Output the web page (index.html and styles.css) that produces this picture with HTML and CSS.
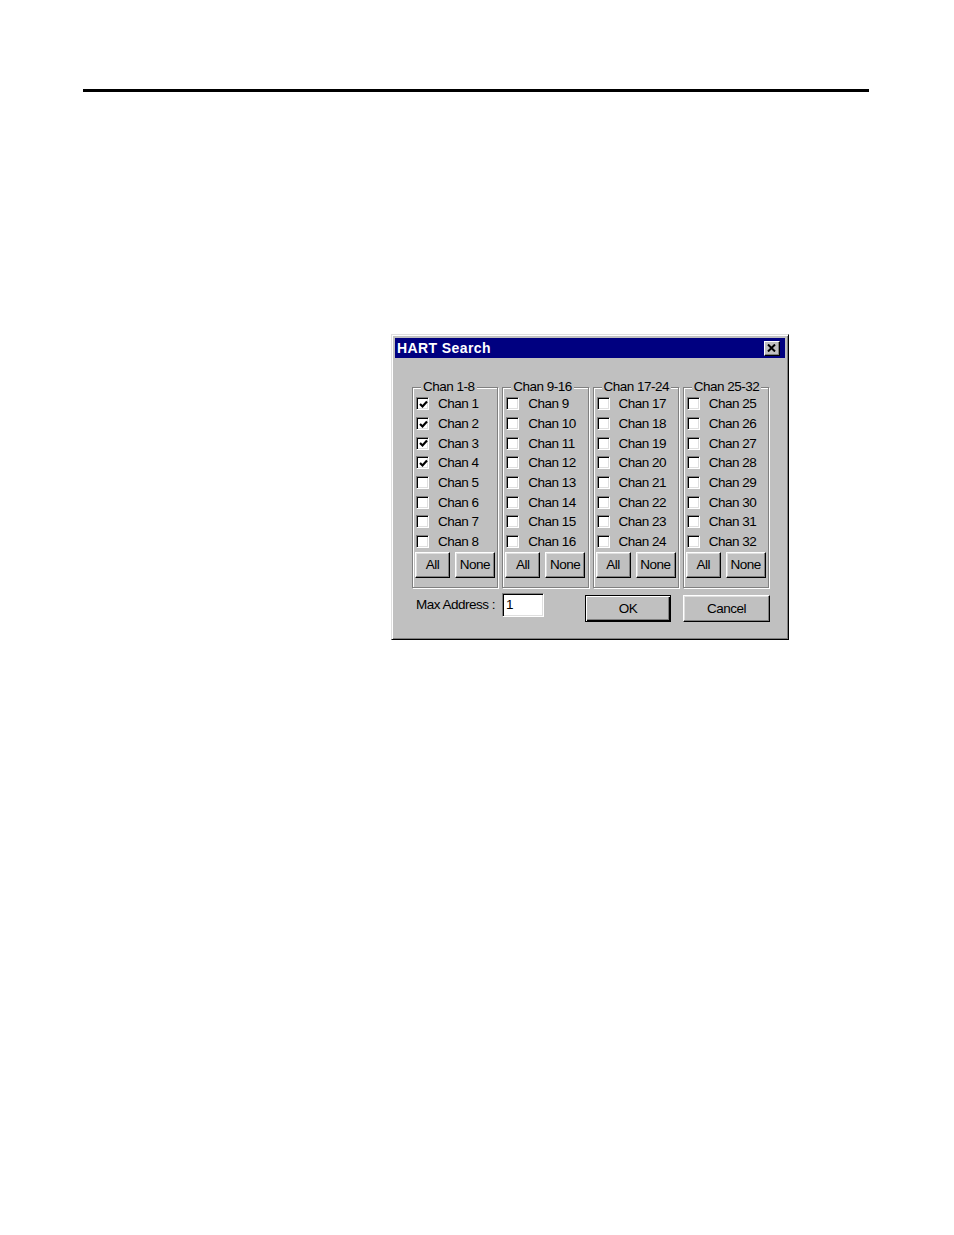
FILE: index.html
```html
<!DOCTYPE html>
<html>
<head>
<meta charset="utf-8">
<title>HART Search</title>
<link rel="stylesheet" href="styles.css">
</head>
<body>
<div class="rule"></div>
<div class="dialog">
  <div class="titlebar">
    <span class="title">HART Search</span>
    <span class="close"><svg width="9" height="8" viewBox="0 0 9 8"><path d="M1 0.5 L8 7.5 M8 0.5 L1 7.5" stroke="#000" stroke-width="2" fill="none"/></svg></span>
  </div>
  <div class="body">
    <div class="groups">
      <div class="group">
        <span class="legend">Chan 1-8</span>
        <div class="row"><span class="cb"><svg class="tick" width="9" height="9" viewBox="0 0 9 9"><path d="M1 4 L3.5 6.5 L8 1.5" stroke="#000" stroke-width="2.2" fill="none"/></svg></span><span class="lbl">Chan 1</span></div>
        <div class="row"><span class="cb"><svg class="tick" width="9" height="9" viewBox="0 0 9 9"><path d="M1 4 L3.5 6.5 L8 1.5" stroke="#000" stroke-width="2.2" fill="none"/></svg></span><span class="lbl">Chan 2</span></div>
        <div class="row"><span class="cb"><svg class="tick" width="9" height="9" viewBox="0 0 9 9"><path d="M1 4 L3.5 6.5 L8 1.5" stroke="#000" stroke-width="2.2" fill="none"/></svg></span><span class="lbl">Chan 3</span></div>
        <div class="row"><span class="cb"><svg class="tick" width="9" height="9" viewBox="0 0 9 9"><path d="M1 4 L3.5 6.5 L8 1.5" stroke="#000" stroke-width="2.2" fill="none"/></svg></span><span class="lbl">Chan 4</span></div>
        <div class="row"><span class="cb"></span><span class="lbl">Chan 5</span></div>
        <div class="row"><span class="cb"></span><span class="lbl">Chan 6</span></div>
        <div class="row"><span class="cb"></span><span class="lbl">Chan 7</span></div>
        <div class="row"><span class="cb"></span><span class="lbl">Chan 8</span></div>
        <div class="btns"><span class="btn all">All</span><span class="btn none">None</span></div>
      </div>
      <div class="group">
        <span class="legend">Chan 9-16</span>
        <div class="row"><span class="cb"></span><span class="lbl">Chan 9</span></div>
        <div class="row"><span class="cb"></span><span class="lbl">Chan 10</span></div>
        <div class="row"><span class="cb"></span><span class="lbl">Chan 11</span></div>
        <div class="row"><span class="cb"></span><span class="lbl">Chan 12</span></div>
        <div class="row"><span class="cb"></span><span class="lbl">Chan 13</span></div>
        <div class="row"><span class="cb"></span><span class="lbl">Chan 14</span></div>
        <div class="row"><span class="cb"></span><span class="lbl">Chan 15</span></div>
        <div class="row"><span class="cb"></span><span class="lbl">Chan 16</span></div>
        <div class="btns"><span class="btn all">All</span><span class="btn none">None</span></div>
      </div>
      <div class="group">
        <span class="legend">Chan 17-24</span>
        <div class="row"><span class="cb"></span><span class="lbl">Chan 17</span></div>
        <div class="row"><span class="cb"></span><span class="lbl">Chan 18</span></div>
        <div class="row"><span class="cb"></span><span class="lbl">Chan 19</span></div>
        <div class="row"><span class="cb"></span><span class="lbl">Chan 20</span></div>
        <div class="row"><span class="cb"></span><span class="lbl">Chan 21</span></div>
        <div class="row"><span class="cb"></span><span class="lbl">Chan 22</span></div>
        <div class="row"><span class="cb"></span><span class="lbl">Chan 23</span></div>
        <div class="row"><span class="cb"></span><span class="lbl">Chan 24</span></div>
        <div class="btns"><span class="btn all">All</span><span class="btn none">None</span></div>
      </div>
      <div class="group">
        <span class="legend">Chan 25-32</span>
        <div class="row"><span class="cb"></span><span class="lbl">Chan 25</span></div>
        <div class="row"><span class="cb"></span><span class="lbl">Chan 26</span></div>
        <div class="row"><span class="cb"></span><span class="lbl">Chan 27</span></div>
        <div class="row"><span class="cb"></span><span class="lbl">Chan 28</span></div>
        <div class="row"><span class="cb"></span><span class="lbl">Chan 29</span></div>
        <div class="row"><span class="cb"></span><span class="lbl">Chan 30</span></div>
        <div class="row"><span class="cb"></span><span class="lbl">Chan 31</span></div>
        <div class="row"><span class="cb"></span><span class="lbl">Chan 32</span></div>
        <div class="btns"><span class="btn all">All</span><span class="btn none">None</span></div>
      </div>
    </div>
    <div class="bottom">
      <span class="maxlbl">Max Address :</span>
      <span class="input">1</span>
      <span class="btn ok">OK</span>
      <span class="btn cancel">Cancel</span>
    </div>
  </div>
</div>
</body>
</html>
```

FILE: styles.css
```css
html, body {
  margin: 0;
  padding: 0;
  background: #fff;
}

body {
  font-family: "Liberation Sans", Arial, sans-serif;
  font-size: 13.5px;
  letter-spacing: -0.5px;
  color: #000;
}

.rule {
  margin: 89px 0 0 83px;
  width: 786px;
  height: 3px;
  background: #000;
}

.dialog {
  margin: 242px 0 0 391px;
  width: 398px;
  height: 306px;
  box-sizing: border-box;
  background: #c0c0c0;
  border: 1px solid;
  border-color: #dfdfdf #000 #000 #dfdfdf;
  box-shadow: inset 1px 1px 0 #fff, inset -1px -1px 0 #808080;
  padding: 3px;
}

.titlebar {
  height: 20px;
  background: #000080;
  display: flex;
  align-items: center;
  justify-content: space-between;
  padding: 0 5px 0 2px;
}

.title {
  color: #fff;
  font-weight: bold;
  font-size: 14px;
  letter-spacing: 0.4px;
}

.close {
  width: 16px;
  height: 15px;
  box-sizing: border-box;
  background: #c0c0c0;
  border: 1px solid;
  border-color: #fff #000 #000 #fff;
  box-shadow: inset -1px -1px 0 #808080;
  display: flex;
  align-items: center;
  justify-content: center;
  padding: 0 1px 1px 0;
}

.close svg {
  display: block;
}

.body {
  padding: 29px 0 0 17px;
}

.groups {
  width: 357px;
  display: grid;
  grid-template-columns: repeat(4, 1fr);
  column-gap: 4px;
}

.group {
  position: relative;
  border: 1px solid #808080;
  box-shadow: inset 1px 1px 0 #fff, 1px 1px 0 #fff;
  padding: 6px 0 9px 3px;
}

.legend {
  position: absolute;
  top: -9px;
  left: 8px;
  background: #c0c0c0;
  padding: 0 2px;
  line-height: 15px;
  white-space: nowrap;
}

.row {
  height: 19.7px;
  display: flex;
  align-items: center;
}

.cb {
  width: 13px;
  height: 13px;
  box-sizing: border-box;
  background: #fff;
  border: 1px solid;
  border-color: #808080 #fff #fff #808080;
  box-shadow: inset 1px 1px 0 #000, inset -1px -1px 0 #dfdfdf;
  display: flex;
  align-items: center;
  justify-content: center;
  padding: 1px 0 0 1px;
  flex: none;
}

.tick {
  display: block;
}

.lbl {
  margin-left: 9px;
  white-space: nowrap;
}

.btns {
  display: flex;
  gap: 5px;
  margin-left: -1px;
}

.btn {
  height: 26px;
  box-sizing: border-box;
  background: #c0c0c0;
  border: 1px solid;
  border-color: #fff #000 #000 #fff;
  box-shadow: inset -1px -1px 0 #808080, inset 1px 1px 0 #dfdfdf;
  display: flex;
  align-items: center;
  justify-content: center;
  white-space: nowrap;
}

.btn.all {
  width: 35px;
}

.btn.none {
  width: 40px;
}

.bottom {
  display: flex;
  align-items: flex-start;
  margin-top: 5px;
}

.maxlbl {
  margin-left: 4px;
  width: 82px;
  line-height: 24px;
  white-space: nowrap;
}

.input {
  margin-left: 4px;
  width: 42px;
  height: 24px;
  box-sizing: border-box;
  background: #fff;
  border: 1px solid;
  border-color: #808080 #fff #fff #808080;
  box-shadow: inset 1px 1px 0 #000, inset -1px -1px 0 #dfdfdf;
  padding-left: 3px;
  line-height: 22px;
}

.btn.ok {
  margin: 2px 0 0 41px;
  width: 86px;
  height: 27px;
  border-color: #000;
  box-shadow: inset 1px 1px 0 #fff, inset -1px -1px 0 #000, inset -2px -2px 0 #808080;
}

.btn.cancel {
  margin: 2px 0 0 12px;
  width: 87px;
  height: 27px;
}
```
